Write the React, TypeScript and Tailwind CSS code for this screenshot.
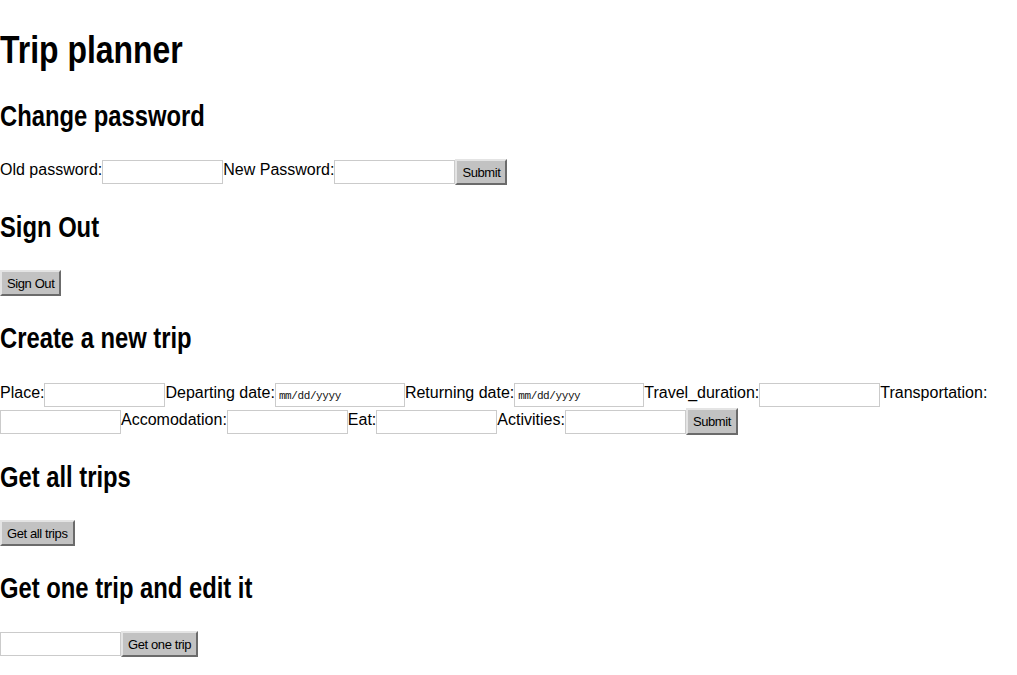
import React from "react";

function Btn({ children }: { children: React.ReactNode }) {
  return (
    <button
      type="button"
      className="h-[26px] shrink-0 cursor-default border-2 border-t-[#e4e4e4] border-l-[#e4e4e4] border-r-[#6b6b6b] border-b-[#6b6b6b] bg-[#c2c2c2] px-[5px] text-[13px] leading-none tracking-[-0.4px] text-black"
    >
      {children}
    </button>
  );
}

function TextInput() {
  return (
    <input
      type="text"
      className="h-[24px] w-[121px] shrink-0 border border-[#cbcbcb] bg-white px-[2px] text-[13px] outline-none"
    />
  );
}

function DateInput() {
  return (
    <input
      type="text"
      placeholder="mm/dd/yyyy"
      className="h-[24px] w-[130px] shrink-0 border border-[#cbcbcb] bg-white pl-[3px] pt-[3px] font-['Liberation_Mono',monospace] text-[11px] tracking-[-0.4px] text-black outline-none placeholder:text-[#111]"
    />
  );
}

function H2({ children }: { children: React.ReactNode }) {
  return (
    <h2 className="mt-[25px] mb-[26px] origin-left scale-x-[0.82] text-[29px] font-bold leading-[34px] whitespace-nowrap">
      {children}
    </h2>
  );
}

function L({ children, tall }: { children: React.ReactNode; tall?: boolean }) {
  return (
    <span
      className={
        tall
          ? "h-[27px] shrink-0 whitespace-nowrap text-[16px] leading-[23px]"
          : "h-[26px] shrink-0 whitespace-nowrap text-[16px] leading-[22px]"
      }
    >
      {children}
    </span>
  );
}

export default function App() {
  return (
    <div className="min-h-screen w-full bg-white text-black font-['Liberation_Sans',Arial,sans-serif]">
      <h1 className="mt-[26px] origin-left scale-x-[0.84] text-[38px] font-bold leading-[48px] whitespace-nowrap">
        Trip planner
      </h1>

      <H2>Change password</H2>
      <div className="flex items-center">
        <L>Old password:</L>
        <TextInput />
        <L>New Password:</L>
        <TextInput />
        <Btn>Submit</Btn>
      </div>

      <H2>Sign Out</H2>
      <div className="flex">
        <Btn>Sign Out</Btn>
      </div>

      <H2>Create a new trip</H2>
      <div className="flex w-full flex-wrap items-center">
        <L tall>Place:</L>
        <TextInput />
        <L tall>Departing date:</L>
        <DateInput />
        <L tall>Returning date:</L>
        <DateInput />
        <L tall>Travel_duration:</L>
        <TextInput />
        <L tall>Transportation:</L>
        <TextInput />
        <L tall>Accomodation:</L>
        <TextInput />
        <L tall>Eat:</L>
        <TextInput />
        <L tall>Activities:</L>
        <TextInput />
        <div className="flex h-[27px] items-center">
          <button
            type="button"
            className="h-[27px] shrink-0 cursor-default border-2 border-t-[#e4e4e4] border-l-[#e4e4e4] border-r-[#6b6b6b] border-b-[#6b6b6b] bg-[#c2c2c2] px-[5px] text-[13px] leading-none tracking-[-0.4px] text-black"
          >
            Submit
          </button>
        </div>
      </div>

      <H2>Get all trips</H2>
      <div className="flex">
        <Btn>Get all trips</Btn>
      </div>

      <H2>Get one trip and edit it</H2>
      <div className="flex items-center">
        <TextInput />
        <Btn>Get one trip</Btn>
      </div>
    </div>
  );
}
